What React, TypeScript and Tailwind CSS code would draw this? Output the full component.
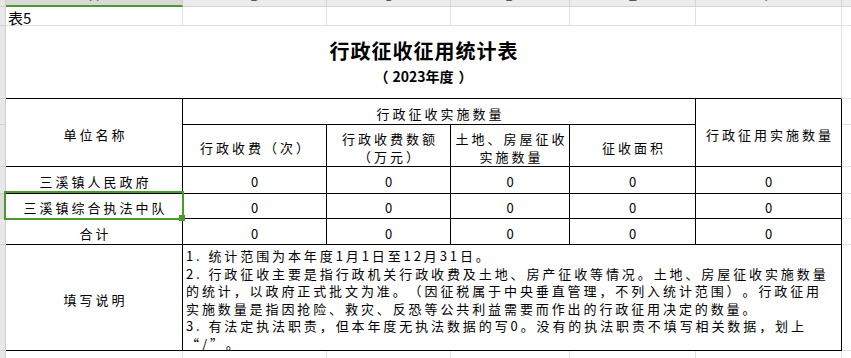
import React from "react";

const L = "border-[#e1e1e1]";

function ColLetter({ children, green }: { children: React.ReactNode; green?: boolean }) {
  return (
    <span
      className={
        "-mt-[9px] leading-[12px] text-[13px] [font-family:'Liberation_Sans',sans-serif] " +
        (green ? "text-[#1f6f3a]" : "text-[#555555]")
      }
    >
      {children}
    </span>
  );
}

const notes = [
  "1. 统计范围为本年度1月1日至12月31日。",
  "2. 行政征收主要是指行政机关行政收费及土地、房产征收等情况。土地、房屋征收实施数量",
  "的统计，以政府正式批文为准。（因征税属于中央垂直管理，不列入统计范围）。行政征用",
  "实施数量是指因抢险、救灾、反恐等公共利益需要而作出的行政征用决定的数量。",
  "3. 有法定执法职责，但本年度无执法数据的写0。没有的执法职责不填写相关数据，划上",
  "“/”。",
];

export default function App() {
  return (
    <div className="w-[851px] h-[358px] overflow-hidden bg-white text-black [text-spacing-trim:space-all] [font-family:'Noto_Sans_CJK_SC','Liberation_Sans',sans-serif]">
      <div className="grid grid-cols-[6px_177px_144px_124px_119px_126px_146px_10px] grid-rows-[7px_19px_73px_26px_42px_27px_25px_26px_106px_8px] text-[13px] leading-[17px]">
        {/* Column header strip */}
        <div className="col-start-1 row-start-1 bg-[#e6e6e6] border-r border-b border-[#cfcfcf]" />
        <div className="col-start-2 row-start-1 bg-[#d9d9d9] border-r border-r-[#cfcfcf] border-b-2 border-b-[#4a9a2c] overflow-hidden flex justify-center items-start">
          <ColLetter green>A</ColLetter>
        </div>
        <div className="col-start-3 row-start-1 bg-[#ececec] border-r border-b border-[#d4d4d4] overflow-hidden flex justify-center items-start">
          <ColLetter>B</ColLetter>
        </div>
        <div className="col-start-4 row-start-1 bg-[#ececec] border-r border-b border-[#d4d4d4] overflow-hidden flex justify-center items-start">
          <ColLetter>C</ColLetter>
        </div>
        <div className="col-start-5 row-start-1 bg-[#ececec] border-r border-b border-[#d4d4d4] overflow-hidden flex justify-center items-start">
          <ColLetter>D</ColLetter>
        </div>
        <div className="col-start-6 row-start-1 bg-[#ececec] border-r border-b border-[#d4d4d4] overflow-hidden flex justify-center items-start">
          <ColLetter>E</ColLetter>
        </div>
        <div className="col-start-7 row-start-1 bg-[#ececec] border-r border-b border-[#d4d4d4] overflow-hidden flex justify-center items-start">
          <ColLetter>F</ColLetter>
        </div>
        <div className="col-start-8 row-start-1 bg-[#ececec] border-b border-[#d4d4d4]" />

        {/* Row header strip */}
        <div className="col-start-1 row-start-2 bg-[#e8e8e8] border-r border-b border-[#d0d0d0]" />
        <div className="col-start-1 row-start-3 bg-[#e8e8e8] border-r border-b border-[#d0d0d0]" />
        <div className="col-start-1 row-start-4 bg-[#e8e8e8] border-r border-b border-[#d0d0d0]" />
        <div className="col-start-1 row-start-5 bg-[#e8e8e8] border-r border-b border-[#d0d0d0]" />
        <div className="col-start-1 row-start-6 bg-[#e8e8e8] border-r border-b border-[#d0d0d0]" />
        <div className="col-start-1 row-start-7 bg-[#dcdcdc] border-r border-b border-[#d0d0d0]" />
        <div className="col-start-1 row-start-8 bg-[#e8e8e8] border-r border-b border-[#d0d0d0]" />
        <div className="col-start-1 row-start-9 bg-[#e8e8e8] border-r border-b border-[#d0d0d0]" />
        <div className="col-start-1 row-start-10 bg-[#e8e8e8] border-r border-[#d0d0d0]" />

        {/* Row 2: 表5 */}
        <div className={"col-start-2 row-start-2 border-r border-b flex items-center pl-[2px] pt-[2px] text-[15px] leading-[17px] " + L}>表5</div>
        <div className={"col-start-3 row-start-2 border-r border-b " + L} />
        <div className={"col-start-4 row-start-2 border-r border-b " + L} />
        <div className={"col-start-5 row-start-2 border-r border-b " + L} />
        <div className={"col-start-6 row-start-2 border-r border-b " + L} />
        <div className={"col-start-7 row-start-2 border-r border-b " + L} />
        <div className={"col-start-8 row-start-2 border-b " + L} />

        {/* Row 3: title */}
        <div className="col-start-2 col-span-6 row-start-3 border-r border-r-[#e1e1e1] border-b border-b-black flex flex-col items-center pt-[13px]">
          <div className="text-[20px] leading-[24px] font-bold tracking-[1px] pl-[1px]">行政征收征用统计表</div>
          <div className="mt-[4px] text-[14px] leading-[18px] font-bold flex">
            <span className="mr-[4px]">（</span>
            <span>2023年度</span>
            <span className="ml-[5px]">）</span>
          </div>
        </div>
        <div className={"col-start-8 row-start-3 border-b " + L} />

        {/* Header rows */}
        <div className="col-start-2 row-start-4 row-span-2 border-r border-b border-black flex items-center justify-center pt-[4px] tracking-[3px] pl-[3px]">单位名称</div>
        <div className="col-start-3 col-span-4 row-start-4 border-r border-b border-black flex items-center justify-center pt-[3px] tracking-[3px] pl-[3px]">行政征收实施数量</div>
        <div className="col-start-7 row-start-4 row-span-2 border-r border-b border-black flex items-center justify-center pt-[4px] tracking-[3px] pl-[3px]">行政征用实施数量</div>
        <div className={"col-start-8 row-start-4 border-b " + L} />
        <div className={"col-start-8 row-start-5 border-b " + L} />

        <div className="col-start-3 row-start-5 border-r border-b border-black flex items-center justify-center pt-[4px] tracking-[3px] pl-[3px]">行政收费（次）</div>
        <div className="col-start-4 row-start-5 border-r border-b border-black flex flex-col items-center justify-center pt-[4px] tracking-[3px] pl-[3px] leading-[17.5px]">
          <span>行政收费数额</span>
          <span>（万元）</span>
        </div>
        <div className="col-start-5 row-start-5 border-r border-b border-black flex flex-col items-center justify-center pt-[4px] tracking-[3px] pl-[3px] leading-[17.5px]">
          <span>土地、房屋征收</span>
          <span>实施数量</span>
        </div>
        <div className="col-start-6 row-start-5 border-r border-b border-black flex items-center justify-center pt-[4px] tracking-[3px] pl-[3px]">征收面积</div>

        {/* Data rows */}
        <div className="col-start-2 row-start-6 border-r border-b border-black flex items-center justify-center pt-[3px] tracking-[3px] pl-[3px]">三溪镇人民政府</div>
        <div className="col-start-3 row-start-6 border-r border-b border-black flex items-center justify-center pt-[3px]">0</div>
        <div className="col-start-4 row-start-6 border-r border-b border-black flex items-center justify-center pt-[3px]">0</div>
        <div className="col-start-5 row-start-6 border-r border-b border-black flex items-center justify-center pt-[3px]">0</div>
        <div className="col-start-6 row-start-6 border-r border-b border-black flex items-center justify-center pt-[3px]">0</div>
        <div className="col-start-7 row-start-6 border-r border-b border-black flex items-center justify-center pt-[3px]">0</div>
        <div className={"col-start-8 row-start-6 border-b " + L} />

        <div className="col-start-2 row-start-7 border-r border-b border-black flex items-center justify-center pt-[3px] tracking-[3px] pl-[3px] relative">
          三溪镇综合执法中队
          <div className="absolute -left-[2px] -right-[2px] -top-[3px] -bottom-[2px] border-2 border-[#4a9a2c] z-10" />
          <div className="absolute -right-[3px] -bottom-[3px] w-[6px] h-[6px] bg-[#4a9a2c] z-20" />
        </div>
        <div className="col-start-3 row-start-7 border-r border-b border-black flex items-center justify-center pt-[3px]">0</div>
        <div className="col-start-4 row-start-7 border-r border-b border-black flex items-center justify-center pt-[3px]">0</div>
        <div className="col-start-5 row-start-7 border-r border-b border-black flex items-center justify-center pt-[3px]">0</div>
        <div className="col-start-6 row-start-7 border-r border-b border-black flex items-center justify-center pt-[3px]">0</div>
        <div className="col-start-7 row-start-7 border-r border-b border-black flex items-center justify-center pt-[3px]">0</div>
        <div className={"col-start-8 row-start-7 border-b " + L} />

        <div className="col-start-2 row-start-8 border-r border-b border-black flex items-center justify-center pt-[3px] tracking-[3px] pl-[3px]">合计</div>
        <div className="col-start-3 row-start-8 border-r border-b border-black flex items-center justify-center pt-[3px]">0</div>
        <div className="col-start-4 row-start-8 border-r border-b border-black flex items-center justify-center pt-[3px]">0</div>
        <div className="col-start-5 row-start-8 border-r border-b border-black flex items-center justify-center pt-[3px]">0</div>
        <div className="col-start-6 row-start-8 border-r border-b border-black flex items-center justify-center pt-[3px]">0</div>
        <div className="col-start-7 row-start-8 border-r border-b border-black flex items-center justify-center pt-[3px]">0</div>
        <div className={"col-start-8 row-start-8 border-b " + L} />

        {/* Notes */}
        <div className="col-start-2 row-start-9 border-r border-b border-black flex items-center justify-center pt-[4px] tracking-[3px] pl-[3px]">填写说明</div>
        <div className="col-start-3 col-span-5 row-start-9 border-r border-b border-black overflow-hidden pl-[3px] pt-[2px] tracking-[2.9px] leading-[17.6px]">
          {notes.map((n, i) => (
            <div key={i} className="whitespace-pre">{n}</div>
          ))}
        </div>
        <div className={"col-start-8 row-start-9 border-b " + L} />

        {/* Bottom partial row */}
        <div className={"col-start-2 row-start-10 border-r " + L} />
        <div className={"col-start-3 row-start-10 border-r " + L} />
        <div className={"col-start-4 row-start-10 border-r " + L} />
        <div className={"col-start-5 row-start-10 border-r " + L} />
        <div className={"col-start-6 row-start-10 border-r " + L} />
        <div className={"col-start-7 row-start-10 border-r " + L} />
      </div>
    </div>
  );
}
